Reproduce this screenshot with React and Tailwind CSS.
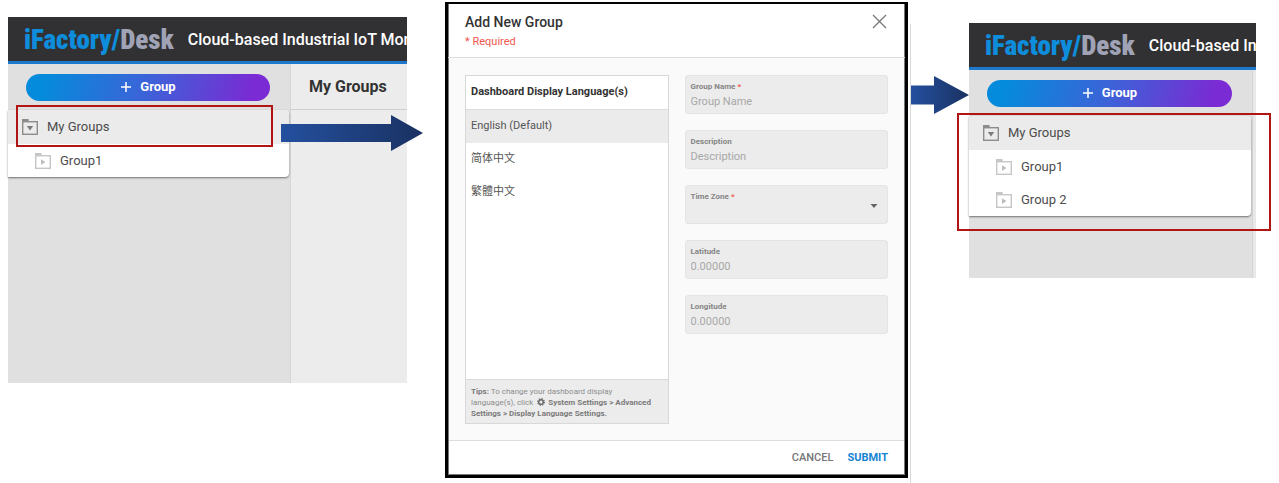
import React from "react";

const LANGUAGES = ["English (Default)", "简体中文", "繁體中文"];

function FolderIcon({ open }) {
  return (
    <svg width="18" height="18" viewBox="0 0 18 18" fill="none" className="shrink-0" aria-hidden="true">
      <path d="M1 2.2H7.6" stroke={open ? "#8c8c8c" : "#c6c6c6"} strokeWidth="2.4" />
      <rect x="1.7" y="3.7" width="14.6" height="12.6" stroke={open ? "#8c8c8c" : "#c6c6c6"} strokeWidth="1.4" />
      {open ? <path d="M5.8 8H12.2L9 12.6Z" fill="#7b7b7b" /> : <path d="M7 7.2V13L11.4 10.1Z" fill="#bdbdbd" />}
    </svg>
  );
}

function BrandBar() {
  return (
    <header className="flex h-[47px] items-center gap-3.5 overflow-hidden border-b-3 border-[#1c79ce] bg-[#313133] pt-0.5 pl-4 whitespace-nowrap">
      <span className="font-['Roboto_Condensed','Liberation_Sans_Narrow','Liberation_Sans',sans-serif] text-[27px] leading-8 font-black text-[#0d8ddb]">
        iFactory/<span className="text-[#9fa3b5]">Desk</span>
      </span>
      <span className="text-base font-medium text-white">Cloud-based Industrial IoT Monitoring</span>
    </header>
  );
}

function AddButton() {
  return (
    <div className="flex h-[46px] items-center pr-5 pl-[18px]">
      <button
        type="button"
        className="flex h-[27px] w-full items-center justify-center gap-2 rounded-full bg-linear-[105deg,#058bdb_8%,#3d62d8_50%,#7a2bd3_92%] text-[13px] font-bold text-white"
      >
        <svg width="12" height="12" viewBox="0 0 12 12" stroke="currentColor" strokeWidth="1.5" aria-hidden="true">
          <path d="M6 1V11M1 6H11" />
        </svg>
        Group
      </button>
    </div>
  );
}

function GroupTree({ groups, markRoot, markAll }) {
  return (
    <ul className="relative mr-px rounded-r bg-white text-[13px] text-[#4c4c4c] shadow-[0_1px_2px_rgba(0,0,0,0.5)]">
      <li className="relative flex h-[34px] items-center gap-2 rounded-tr bg-[#ebebeb] pl-[13px]">
        <FolderIcon open />
        My Groups
        {markRoot && <span className="absolute -top-[5px] right-4 -bottom-[3px] left-2 border-2 border-[#b01414]" />}
      </li>
      {groups.map((name) => (
        <li key={name} className="flex h-[33px] items-center gap-2 pl-[26px]">
          <FolderIcon />
          {name}
        </li>
      ))}
      {markAll && <li aria-hidden="true" className="absolute -top-[3px] -right-5 -bottom-[15px] -left-3 border-2 border-[#b01414]" />}
    </ul>
  );
}

function Field({ id, label, placeholder, required }) {
  return (
    <div className="flex h-[39px] flex-col rounded-[3px] border border-[#e4e4e4] bg-[#ececec] px-[5px] pt-1.5">
      <label htmlFor={id} className="text-[8px] leading-[10px] font-bold text-[#858585]">
        {label}
        {required && <span className="text-[#ee5a52]"> *</span>}
      </label>
      <input
        id={id}
        type="text"
        placeholder={placeholder}
        className="h-[18px] w-full bg-transparent text-[11px] text-[#555] outline-none placeholder:text-[#a8a8a8]"
      />
    </div>
  );
}

function GroupDialog() {
  return (
    <section
      role="dialog"
      aria-labelledby="dialog-title"
      className="mt-0.5 flex h-[476px] min-w-[463px] flex-[463_1_0px] flex-col border-[3px] border-t-2 border-black bg-white shadow-[inset_1px_0_#777,inset_-1px_-1px_#777]"
    >
      <header className="flex h-[54px] items-start justify-between border-b border-[#dedede] pt-2 pr-[18px] pl-[17px]">
        <div>
          <h2 id="dialog-title" className="text-sm leading-5 font-medium text-[#333]">Add New Group</h2>
          <p className="text-[11px] leading-5 text-[#f0564c]">* Required</p>
        </div>
        <button type="button" aria-label="Close" className="mt-0.5">
          <svg width="15" height="15" viewBox="0 0 15 15" stroke="#777" strokeWidth="1.3" aria-hidden="true">
            <path d="M1 1L14 14M14 1L1 14" />
          </svg>
        </button>
      </header>

      <div className="mx-px grid flex-1 grid-cols-2 gap-4 bg-[#fafafa] px-4 pt-[17px] pb-4">
        <div className="flex flex-col border border-[#d8d8d8] bg-white text-[11px]">
          <h3 className="flex h-[33px] items-center px-[5px] font-bold text-[#333]">Dashboard Display Language(s)</h3>
          <ul className="flex-1 text-[#555]">
            {LANGUAGES.map((name, i) => (
              <li
                key={name}
                className={i === 0 ? "flex h-[34px] items-center border-t border-[#dcdcdc] bg-[#ebebeb] px-[5px]" : "flex h-[33px] items-center px-[5px]"}
              >
                {name}
              </li>
            ))}
          </ul>
          <p className="border-t border-[#d8d8d8] bg-[#ececec] px-[5px] pt-1.5 pb-1 text-[8px] leading-[11px] text-[#8c8c8c]">
            <b className="text-[#7b7b7b]">Tips:</b> To change your dashboard display
            <br />
            language(s), click{" "}
            <svg width="8" height="8" viewBox="0 0 8 8" fill="none" stroke="#6a6a6a" className="mr-px ml-0.5 inline-block align-[-1px]" aria-hidden="true">
              <circle cx="4" cy="4" r="2.3" strokeWidth="1.5" />
              <circle cx="4" cy="4" r="3.4" strokeWidth="1.1" strokeDasharray="1.4 1.27" />
            </svg>{" "}
            <b className="text-[#7b7b7b]">System Settings &gt; Advanced Settings &gt; Display Language Settings.</b>
          </p>
        </div>

        <form className="flex flex-col gap-4">
          <Field id="group-name" label="Group Name" placeholder="Group Name" required />
          <Field id="description" label="Description" placeholder="Description" />
          <div className="relative flex h-[39px] flex-col rounded-[3px] border border-[#e4e4e4] bg-[#ececec] px-[5px] pt-1.5">
            <label htmlFor="time-zone" className="text-[8px] leading-[10px] font-bold text-[#858585]">
              Time Zone<span className="text-[#ee5a52]"> *</span>
            </label>
            <select id="time-zone" className="h-[18px] w-full appearance-none bg-transparent text-[11px] outline-none">
              <option value=""></option>
            </select>
            <svg width="8" height="4" viewBox="0 0 8 4" className="pointer-events-none absolute top-[18px] right-[9px]" aria-hidden="true">
              <path d="M0.5 0H7.5L4 4Z" fill="#666" />
            </svg>
          </div>
          <Field id="latitude" label="Latitude" placeholder="0.00000" />
          <Field id="longitude" label="Longitude" placeholder="0.00000" />
        </form>
      </div>

      <footer className="mx-px mb-px flex h-[34px] items-center justify-end gap-3.5 border-t border-[#dedede] pt-0.5 pr-4 text-[11px] font-medium">
        <button type="button" className="text-[#757575]">CANCEL</button>
        <button type="button" className="font-bold text-[#1583d3]">SUBMIT</button>
      </footer>
    </section>
  );
}

export default function App() {
  return (
    <main className="flex min-h-screen items-start bg-white pr-[23px] pl-2 font-[Roboto,'Noto_Sans_CJK_SC',sans-serif]">
      <section className="relative mt-[17px] mr-[38px] min-w-[399px] flex-[399_1_0px]">
        <BrandBar />
        <div className="flex h-[319px]">
          <nav aria-label="Groups" className="w-[283px] border-r border-[#d6d6d6] bg-[#e0e0e0]">
            <AddButton />
            <GroupTree groups={["Group1"]} markRoot />
          </nav>
          <div className="flex-1 bg-[#ececec]">
            <h1 className="flex h-[46px] items-center border-b border-[#cfcfcf] pl-[18px] text-base font-bold text-[#333]">My Groups</h1>
          </div>
        </div>
        <svg width="142" height="36" viewBox="0 0 142 36" className="absolute top-[98px] left-[273px]" aria-hidden="true">
          <defs>
            <linearGradient id="arrow-long" x1="0" y1="0" x2="1" y2="0">
              <stop offset="0" stopColor="#24509f" />
              <stop offset="1" stopColor="#1a3161" />
            </linearGradient>
          </defs>
          <path d="M0 9H110V0L142 18L110 36V27H0Z" fill="url(#arrow-long)" />
        </svg>
      </section>

      <GroupDialog />

      <div className="mt-6 ml-0.5 w-[59px] shrink-0 self-stretch border-l border-[#d9d9d9]">
        <svg width="58" height="38" viewBox="0 0 58 38" className="mt-[52px]" aria-hidden="true">
          <defs>
            <linearGradient id="arrow-short" x1="0" y1="0" x2="1" y2="0">
              <stop offset="0" stopColor="#24509f" />
              <stop offset="1" stopColor="#1a3161" />
            </linearGradient>
          </defs>
          <path d="M0 9.5H23V0L58 19L23 38V28.5H0Z" fill="url(#arrow-short)" />
        </svg>
      </div>

      <section className="mt-[23px] min-w-[287px] flex-[287_1_0px]">
        <BrandBar />
        <div className="flex h-[208px] bg-[#e8e8e8]">
          <nav aria-label="Updated groups" className="w-[284px] border-r border-[#d6d6d6] bg-[#e0e0e0]">
            <AddButton />
            <GroupTree groups={["Group1", "Group 2"]} markAll />
          </nav>
        </div>
      </section>
    </main>
  );
}
